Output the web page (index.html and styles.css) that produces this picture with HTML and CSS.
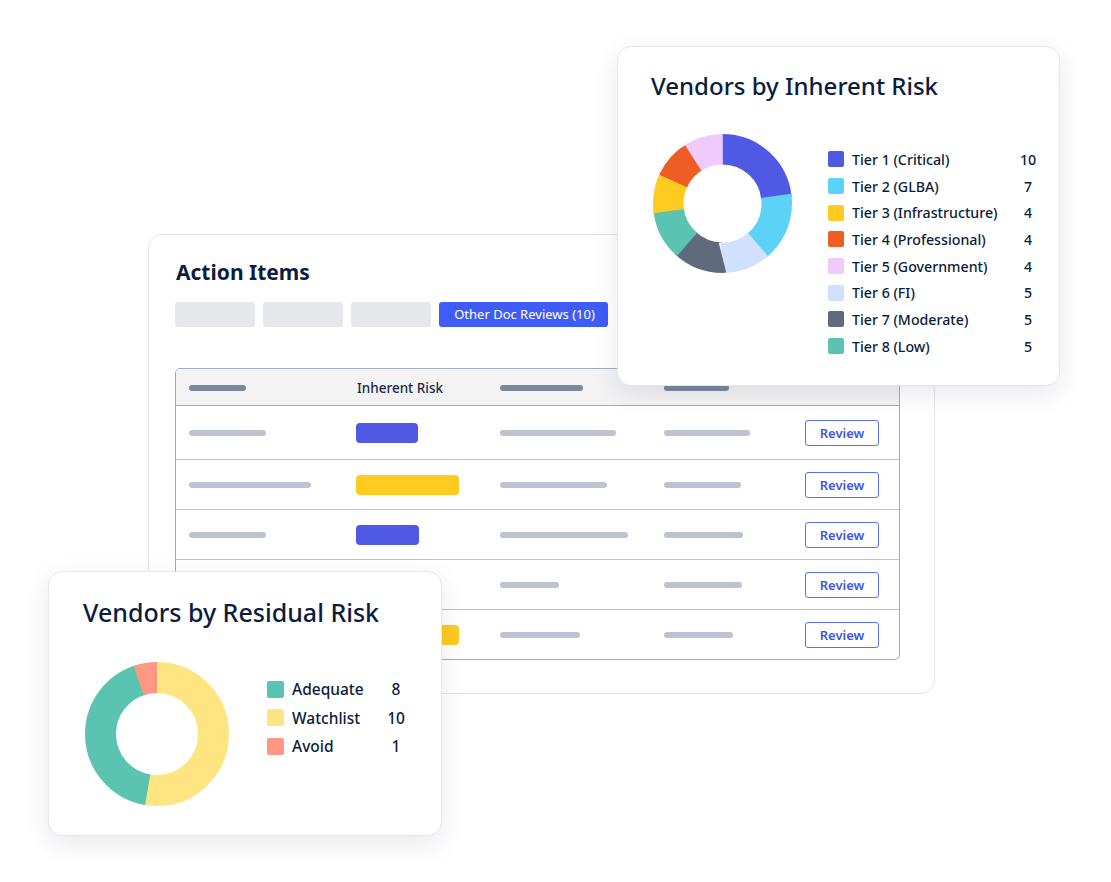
FILE: index.html
```html
<!DOCTYPE html>
<html lang="en">
<head>
<meta charset="utf-8">
<title>Vendor Risk Overview</title>
<link rel="stylesheet" href="styles.css">
</head>
<body>
<div class="stage">

  <section class="card action">
    <h2 class="action-title">Action Items</h2>
    <div class="tabs">
      <span class="tab"></span>
      <span class="tab"></span>
      <span class="tab"></span>
      <span class="tab active">Other Doc Reviews (10)</span>
    </div>
    <div class="table">
      <div class="row head">
        <span class="bar dark" style="width:57px"></span>
        <span class="th">Inherent Risk</span>
        <span class="bar dark" style="width:83px"></span>
        <span class="bar dark" style="width:65px"></span>
        <span></span>
      </div>
      <div class="row first">
        <span class="bar" style="width:77px"></span>
        <span class="pill blue" style="width:62px"></span>
        <span class="bar" style="width:116px"></span>
        <span class="bar" style="width:86px"></span>
        <button class="review">Review</button>
      </div>
      <div class="row">
        <span class="bar" style="width:122px"></span>
        <span class="pill yellow" style="width:103px"></span>
        <span class="bar" style="width:107px"></span>
        <span class="bar" style="width:77px"></span>
        <button class="review">Review</button>
      </div>
      <div class="row">
        <span class="bar" style="width:77px"></span>
        <span class="pill blue" style="width:63px"></span>
        <span class="bar" style="width:128px"></span>
        <span class="bar" style="width:79px"></span>
        <button class="review">Review</button>
      </div>
      <div class="row">
        <span class="bar" style="width:90px"></span>
        <span class="pill blue" style="width:62px"></span>
        <span class="bar" style="width:59px"></span>
        <span class="bar" style="width:78px"></span>
        <button class="review">Review</button>
      </div>
      <div class="row last">
        <span class="bar" style="width:77px"></span>
        <span class="pill yellow" style="width:103px"></span>
        <span class="bar" style="width:80px"></span>
        <span class="bar" style="width:69px"></span>
        <button class="review">Review</button>
      </div>
    </div>
  </section>

  <section class="card inherent">
    <h2 class="chart-title">Vendors by Inherent Risk</h2>
    <div class="chart-body">
      <svg class="donut donut-inherent" viewBox="0 0 139 139" width="139" height="139">
        <g transform="rotate(-90 69.5 69.5)" fill="none" stroke-width="30.5">
          <circle cx="69.5" cy="69.5" r="54.25" pathLength="44" stroke="#5059e4" stroke-dasharray="10.3 33.7" stroke-dashoffset="0"/>
          <circle cx="69.5" cy="69.5" r="54.25" pathLength="44" stroke="#5cd3f6" stroke-dasharray="7.3 36.7" stroke-dashoffset="-10"/>
          <circle cx="69.5" cy="69.5" r="54.25" pathLength="44" stroke="#d0e0fd" stroke-dasharray="5.3 38.7" stroke-dashoffset="-17"/>
          <circle cx="69.5" cy="69.5" r="54.25" pathLength="44" stroke="#5f6b7c" stroke-dasharray="5.3 38.7" stroke-dashoffset="-22"/>
          <circle cx="69.5" cy="69.5" r="54.25" pathLength="44" stroke="#5bc3b1" stroke-dasharray="5.3 38.7" stroke-dashoffset="-27"/>
          <circle cx="69.5" cy="69.5" r="54.25" pathLength="44" stroke="#ffcb21" stroke-dasharray="4.3 39.7" stroke-dashoffset="-32"/>
          <circle cx="69.5" cy="69.5" r="54.25" pathLength="44" stroke="#ee5d25" stroke-dasharray="4.3 39.7" stroke-dashoffset="-36"/>
          <circle cx="69.5" cy="69.5" r="54.25" pathLength="44" stroke="#f1cafd" stroke-dasharray="4 40" stroke-dashoffset="-40"/>
        </g>
      </svg>
      <ul class="legend legend-inherent">
        <li class="legend-row"><span class="swatch c-blue"></span><span class="label">Tier 1 (Critical)</span><span class="num">10</span></li>
        <li class="legend-row"><span class="swatch c-cyan"></span><span class="label">Tier 2 (GLBA)</span><span class="num">7</span></li>
        <li class="legend-row"><span class="swatch c-yellow"></span><span class="label">Tier 3 (Infrastructure)</span><span class="num">4</span></li>
        <li class="legend-row"><span class="swatch c-orange"></span><span class="label">Tier 4 (Professional)</span><span class="num">4</span></li>
        <li class="legend-row"><span class="swatch c-pink"></span><span class="label">Tier 5 (Government)</span><span class="num">4</span></li>
        <li class="legend-row"><span class="swatch c-lightblue"></span><span class="label">Tier 6 (FI)</span><span class="num">5</span></li>
        <li class="legend-row"><span class="swatch c-gray"></span><span class="label">Tier 7 (Moderate)</span><span class="num">5</span></li>
        <li class="legend-row"><span class="swatch c-teal"></span><span class="label">Tier 8 (Low)</span><span class="num">5</span></li>
      </ul>
    </div>
  </section>

  <section class="card residual">
    <h2 class="chart-title big">Vendors by Residual Risk</h2>
    <div class="chart-body">
      <svg class="donut donut-residual" viewBox="0 0 144 144" width="144" height="144">
        <g transform="rotate(-90 72 72)" fill="none" stroke-width="31">
          <circle cx="72" cy="72" r="56.5" pathLength="19" stroke="#ffe581" stroke-dasharray="10.2 8.8" stroke-dashoffset="0"/>
          <circle cx="72" cy="72" r="56.5" pathLength="19" stroke="#5bc4b1" stroke-dasharray="8.2 10.8" stroke-dashoffset="-10"/>
          <circle cx="72" cy="72" r="56.5" pathLength="19" stroke="#ff9783" stroke-dasharray="1 18" stroke-dashoffset="-18"/>
        </g>
      </svg>
      <ul class="legend legend-residual">
        <li class="legend-row"><span class="swatch c-teal"></span><span class="label">Adequate</span><span class="num">8</span></li>
        <li class="legend-row"><span class="swatch c-paleyellow"></span><span class="label">Watchlist</span><span class="num">10</span></li>
        <li class="legend-row"><span class="swatch c-salmon"></span><span class="label">Avoid</span><span class="num">1</span></li>
      </ul>
    </div>
  </section>

</div>
</body>
</html>
```

FILE: styles.css
```css
* { box-sizing: border-box; }

html, body {
  margin: 0;
  padding: 0;
  background: #ffffff;
}

body {
  font-family: "Noto Sans", "Open Sans", "DejaVu Sans", sans-serif;
  color: #0c1c3d;
}

.stage {
  position: relative;
  width: 1111px;
  height: 882px;
  overflow: hidden;
}

.card {
  position: absolute;
  background: #ffffff;
  border-radius: 14px;
}

/* ---------- Action Items ---------- */
.action {
  left: 148px;
  top: 234px;
  width: 787px;
  height: 460px;
  border: 1px solid #e4e6eb;
  padding: 22px 0 0 26px;
}

.action-title {
  margin: 0 0 0 1px;
  font-size: 21px;
  line-height: 30px;
  font-weight: 700;
  color: #0c1d3e;
}

.tabs {
  display: flex;
  gap: 8px;
  margin-top: 15px;
  height: 25px;
}

.tab {
  width: 80px;
  height: 25px;
  border-radius: 3px;
  background: #e5e7eb;
}

.tab.active {
  width: 169px;
  background: #3f5cf6;
  color: #ffffff;
  font-size: 13px;
  line-height: 25px;
  text-align: center;
  padding-left: 2px;
}

.table {
  margin-top: 41px;
  width: 725px;
  border: 1px solid #a3abba;
  border-radius: 5px;
  overflow: hidden;
}

.row {
  display: grid;
  grid-template-columns: 167px 144px 164px 1fr auto;
  align-items: center;
  padding: 0 20px 0 13px;
  height: 50px;
  border-top: 1px solid #bcc2cd;
}

.row.head {
  height: 36px;
  border-top: none;
  background: #f3f3f4;
  padding-top: 2px;
}

.row.first {
  height: 54px;
  border-top-color: #a3abba;
}

.bar {
  display: block;
  height: 6px;
  border-radius: 3px;
  background: #bec4cf;
}

.bar.dark {
  background: #7c879b;
}

.th {
  font-size: 13.5px;
  font-weight: 500;
  line-height: 20px;
  color: #1b2a4a;
  padding-left: 1px;
}

.pill {
  display: block;
  height: 20px;
  border-radius: 4px;
}

.pill.blue { background: #5059e4; }
.pill.yellow { background: #ffcb21; }

.review {
  display: block;
  width: 74px;
  height: 26px;
  border: 1px solid #5a70f3;
  border-radius: 3px;
  background: #ffffff;
  color: #3d56e6;
  font-family: "Noto Sans", "Open Sans", sans-serif;
  font-size: 13px;
  font-weight: 600;
  line-height: 24px;
  padding: 0;
}

/* ---------- chart cards ---------- */
.inherent {
  left: 617px;
  top: 46px;
  width: 443px;
  height: 340px;
  border: 1px solid #e5e7ed;
  box-shadow: 0 8px 26px rgba(30, 40, 80, 0.10);
  padding: 23px 0 0 33px;
}

.residual {
  left: 48px;
  top: 571px;
  width: 394px;
  height: 265px;
  border: 1px solid #e6e8ed;
  box-shadow: 0 8px 26px rgba(30, 40, 80, 0.10);
  padding: 23px 0 0 34px;
}

.chart-title {
  margin: 0;
  font-size: 24px;
  line-height: 32px;
  font-weight: 500;
  color: #0c1c3d;
  white-space: nowrap;
}

.chart-title.big {
  font-size: 25px;
  line-height: 34px;
}

.chart-body {
  display: flex;
  align-items: flex-start;
}

.inherent .chart-body { margin-top: 32px; }
.residual .chart-body { margin-top: 33px; }

.donut { display: block; flex: none; }
.donut-inherent { margin-left: 1.5px; }
.donut-residual { margin-left: 2px; }

.legend {
  list-style: none;
  margin: 0;
  padding: 0;
}

.legend-inherent {
  width: 212px;
  margin-left: 36.5px;
  margin-top: 12px;
}

.legend-residual {
  width: 141px;
  margin-left: 38px;
  margin-top: 13px;
}

.legend-row {
  display: grid;
  align-items: center;
  column-gap: 8px;
  white-space: nowrap;
  font-weight: 500;
}

.legend-inherent .legend-row {
  grid-template-columns: 16px 1fr 24px;
  height: 26.7px;
  font-size: 14.2px;
}

.legend-residual .legend-row {
  grid-template-columns: 17px 1fr 24px;
  height: 28.5px;
  font-size: 15.5px;
}

.swatch {
  display: block;
  border-radius: 2px;
}

.legend-inherent .swatch { width: 16px; height: 16px; }
.legend-residual .swatch { width: 17px; height: 17px; }

.label { color: #0c1c3d; }
.num { text-align: center; color: #0c1c3d; }

.c-blue { background: #5059e4; }
.c-cyan { background: #5cd3f6; }
.c-yellow { background: #ffcb21; }
.c-orange { background: #ee5d25; }
.c-pink { background: #f1cafd; }
.c-lightblue { background: #d0e0fd; }
.c-gray { background: #5f6b7c; }
.c-teal { background: #5bc3b1; }
.c-paleyellow { background: #ffe581; }
.c-salmon { background: #ff9783; }
```
